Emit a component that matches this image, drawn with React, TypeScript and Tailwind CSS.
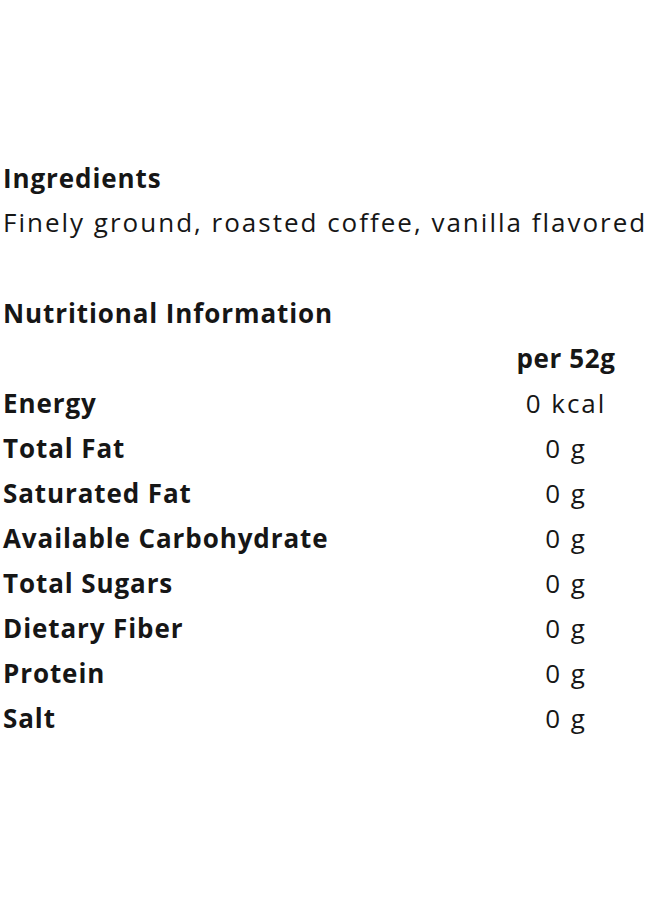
import React from "react";

const rows: [string, string][] = [
  ["Energy", "0 kcal"],
  ["Total Fat", "0 g"],
  ["Saturated Fat", "0 g"],
  ["Available Carbohydrate", "0 g"],
  ["Total Sugars", "0 g"],
  ["Dietary Fiber", "0 g"],
  ["Protein", "0 g"],
  ["Salt", "0 g"],
];

export default function App() {
  return (
    <div
      className="w-[660px] h-[900px] bg-white text-[#161616] pl-[3px] pt-[156px] text-[26px] tracking-[2px]"
      style={{ fontFamily: "'Open Sans', Lato, sans-serif" }}
    >
      <div className="h-[44px] flex items-center font-bold tracking-[0.9px]">Ingredients</div>
      <div className="h-[44px] flex items-center">Finely ground, roasted coffee, vanilla flavored</div>
      <div className="h-[47px]" />
      <div className="h-[45px] flex items-center font-bold tracking-[0.9px]">Nutritional Information</div>
      <div className="h-[45px] flex items-center">
        <div className="flex-1" />
        <div className="w-[140px] mr-[24px] text-center font-bold tracking-[0.6px]">per 52g</div>
      </div>
      {rows.map(([k, v]) => (
        <div key={k} className="h-[45px] flex items-center">
          <div className="flex-1 font-bold tracking-[0.9px]">{k}</div>
          <div className="w-[140px] mr-[24px] text-center">{v}</div>
        </div>
      ))}
    </div>
  );
}
